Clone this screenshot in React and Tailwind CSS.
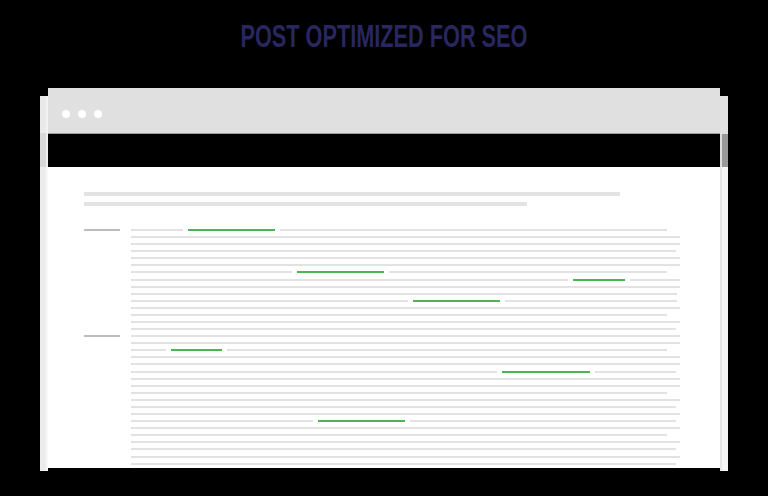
import React from "react";

const ENDS = [667,680,680,676,680,680,667,680,680,677,677,680,667,680,676,680,680,667,680,680,676,680,680,667,680,676,680,676,680,667,680,676,680,676];
const GREENS = { 0: [188, 275], 6: [297, 384], 7: [573, 625], 10: [413, 500], 17: [171, 222], 20: [502, 590], 27: [318, 405] };
const X0 = 131;

function segments(k) {
  const end = ENDS[k];
  const g = GREENS[k];
  if (!g) return [{ from: X0, to: end, green: false }];
  return [
    { from: X0, to: g[0] - 5, green: false },
    { from: g[0], to: g[1], green: true },
    { from: g[1] + 5, to: end, green: false },
  ];
}

function Row({ k }) {
  const segs = segments(k);
  let cursor = X0;
  return (
    <div className="flex h-[7.09px] shrink-0">
      <div className="w-[47px] shrink-0">
        {(k === 0 || k === 15) && <div className="h-[2px] w-[36px] bg-[#bdbdbd]" />}
      </div>
      <div className="flex">
        {segs.map((s, i) => {
          const ml = s.from - cursor;
          cursor = s.to;
          return (
            <div
              key={i}
              className={s.green ? "h-[2px] bg-[#4cb454]" : "h-[2px] bg-[#e2e2e2]"}
              style={{ marginLeft: ml, width: s.to - s.from }}
            />
          );
        })}
      </div>
    </div>
  );
}

export default function App() {
  return (
    <div className="w-[768px] h-[496px] bg-black overflow-hidden flex flex-col">
      <div className="h-[88px] shrink-0 flex justify-center pt-[21px]">
        <div
          className="h-[31px] leading-[31px] text-[31px] font-bold text-[#29275f] whitespace-nowrap scale-x-[0.7] origin-top"
          style={{ fontFamily: '"Liberation Sans", Arial, sans-serif' }}
        >
          POST OPTIMIZED FOR SEO
        </div>
      </div>

      <div className="ml-[40px] w-[688px] h-[383px] flex shrink-0">
        {/* left strip */}
        <div className="w-[8px] mt-[8px] flex flex-col">
          <div className="h-[37px] bg-[#e9e9e9] border-r-2 border-[#f2f2f2]" />
          <div className="h-[34px] bg-[#d8d8d8] border-r-2 border-[#eeeeee]" />
          <div className="flex-1 bg-[#ececec] border-r-2 border-[#f7f7f7]" />
        </div>

        {/* main window */}
        <div className="w-[672px] h-[380px] flex flex-col overflow-hidden">
          <div className="h-[45px] shrink-0 bg-[#e0e0e0] flex items-start gap-[8px] pl-[14px] pt-[22px]">
            <div className="w-[8px] h-[8px] rounded-full bg-white" />
            <div className="w-[8px] h-[8px] rounded-full bg-white" />
            <div className="w-[8px] h-[8px] rounded-full bg-white" />
          </div>
          <div className="h-[1px] shrink-0 bg-[#9e9e9e]" />
          <div className="h-[33px] shrink-0 bg-black" />
          <div className="flex-1 bg-white pl-[36px] pt-[25px] flex flex-col">
            <div className="h-[4px] shrink-0 w-[536px] bg-[#e3e3e3]" />
            <div className="h-[4px] shrink-0 w-[443px] bg-[#e3e3e3] mt-[6px]" />
            <div className="mt-[23px] flex flex-col shrink-0">
              {ENDS.map((_, k) => (
                <Row key={k} k={k} />
              ))}
            </div>
          </div>
        </div>

        {/* right strip */}
        <div className="w-[8px] mt-[8px] flex flex-col">
          <div className="h-[38px] bg-[#e2e2e2]" />
          <div className="h-[33px] bg-[#999999] border-l-2 border-[#dddddd]" />
          <div className="flex-1 bg-[#f6f6f6] border-l-2 border-[#e6e6e6]" />
        </div>
      </div>
    </div>
  );
}
